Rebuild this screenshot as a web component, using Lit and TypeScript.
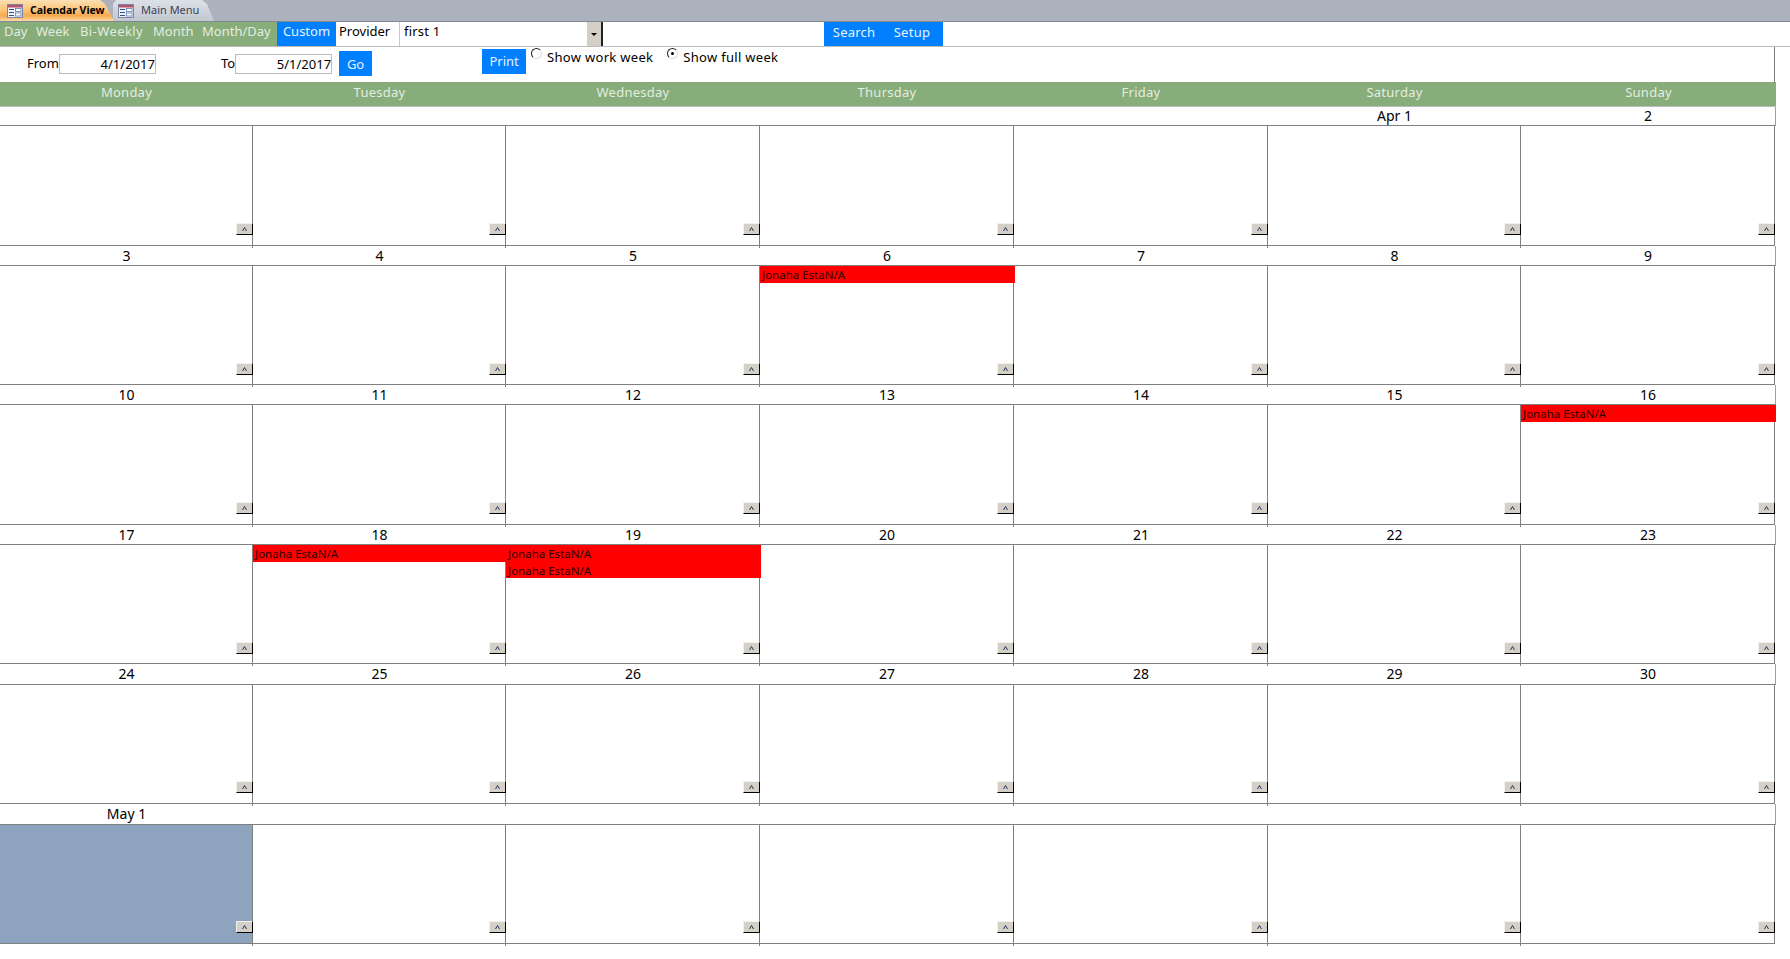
import { LitElement, html, css, svg } from "lit";
import { customElement } from "lit/decorators.js";

const DAYS = ["Monday", "Tuesday", "Wednesday", "Thursday", "Friday", "Saturday", "Sunday"];
const WEEKS: { dates: string[]; events: Record<number, number>; shaded?: number[] }[] = [
  { dates: ["", "", "", "", "", "Apr 1", "2"], events: {} },
  { dates: ["3", "4", "5", "6", "7", "8", "9"], events: { 3: 1 } },
  { dates: ["10", "11", "12", "13", "14", "15", "16"], events: { 6: 1 } },
  { dates: ["17", "18", "19", "20", "21", "22", "23"], events: { 1: 1, 2: 2 } },
  { dates: ["24", "25", "26", "27", "28", "29", "30"], events: {} },
  { dates: ["May 1", "", "", "", "", "", ""], events: {}, shaded: [0] },
];

const formIcon = svg`<svg class="ficon" width="16" height="14" viewBox="0 0 16 14">
  <rect x="0.5" y="0.5" width="15" height="13" fill="#eef1f7" stroke="#7d84a8"/>
  <rect x="1" y="1" width="14" height="2.5" fill="#b9506c"/>
  <rect x="2" y="5" width="5" height="1" fill="#34507f"/>
  <rect x="2" y="8" width="5" height="1" fill="#34507f"/>
  <rect x="2" y="11" width="5" height="1" fill="#34507f"/>
  <rect x="8.5" y="4.5" width="5.5" height="3" fill="#fff" stroke="#5f7fb0" stroke-width="0.8"/>
  <rect x="8.5" y="9" width="5.5" height="3" fill="#fff" stroke="#5f7fb0" stroke-width="0.8"/>
</svg>`;

@customElement("app-root")
export class AppRoot extends LitElement {
  static styles = css`
    :host {
      display: block;
      width: 1790px;
      height: 959px;
      background: #fff;
      overflow: hidden;
      font-family: "Noto Sans", "Open Sans", sans-serif;
      font-size: 13px;
      color: #000;
    }
    .tabs {
      display: flex;
      height: 21px;
      background: #abb2bd;
      border-bottom: 1px solid #808890;
    }
    .tab {
      display: flex;
      align-items: center;
      box-sizing: border-box;
      height: 21px;
      white-space: nowrap;
    }
    .tab span { padding-bottom: 2px; }
    .tab.active {
      width: 114px;
      padding-left: 7px;
      gap: 7px;
      background: linear-gradient(#fbe0b4 0%, #fcc67a 45%, #f8a94e 75%, #fbd9a8 100%);
      font-size: 10.5px;
      font-weight: 700;
      clip-path: polygon(0 0, calc(100% - 14px) 0, calc(100% - 9px) 4px, 100% 100%, 0 100%);
    }
    .tab.other {
      width: 101px;
      margin-left: -1px;
      padding-left: 5px;
      gap: 7px;
      background: linear-gradient(#dde1e7, #c2c7d0);
      color: #3d3f55;
      font-size: 11px;
      clip-path: polygon(3px 0, calc(100% - 12px) 0, calc(100% - 7px) 4px, 100% 100%, 0 100%, 0 4px);
    }
    .ficon { flex: none; }
    .nav {
      display: flex;
      height: 24px;
      border-bottom: 1px solid #bbb;
    }
    .links {
      display: flex;
      width: 277px;
      background: #87ad7a;
      color: #e4ece0;
    }
    .links span {
      line-height: 18px;
      white-space: nowrap;
    }
    .links span:nth-child(1) { margin-left: 4px; width: 32px; }
    .links span:nth-child(2) { width: 44px; }
    .links span:nth-child(3) { width: 73px; letter-spacing: 0.4px; }
    .links span:nth-child(4) { width: 49px; }
    .links span:nth-child(5) { width: 70px; }
    .blue {
      display: flex;
      align-items: center;
      justify-content: center;
      background: #0080ff;
      color: #e8f2ff;
      white-space: nowrap;
    }
    .custom { width: 59px; align-items: flex-start; line-height: 18px; }
    .provider { width: 63px; padding-left: 3px; box-sizing: border-box; line-height: 18px; }
    .combo {
      display: flex;
      width: 204px;
      height: 24px;
      box-sizing: border-box;
      border-left: 1px solid #c8c8c8;
      justify-content: space-between;
    }
    .combo span { padding-left: 4px; line-height: 18px; letter-spacing: 0.2px; }
    .arrow {
      display: flex;
      align-items: center;
      justify-content: center;
      width: 16px;
      box-sizing: border-box;
      background: #d4d0c8;
      border-right: 2px solid #222;
    }
    .arrow i {
      width: 0;
      height: 0;
      border: 3px solid transparent;
      border-top-color: #000;
      border-bottom: 0;
    }
    .right { display: flex; margin-left: 221px; width: 119px; }
    .right .blue { line-height: 20px; align-items: flex-start; letter-spacing: 0.2px; }
    .right .blue:first-child { width: 60px; }
    .right .blue:last-child { width: 59px; padding-right: 3px; box-sizing: border-box; letter-spacing: 0.3px; }
    .toolbar {
      display: flex;
      width: 1775px;
      height: 35px;
      box-sizing: border-box;
      padding-left: 27px;
      border-right: 1px solid #808080;
    }
    .lbl { line-height: 19px; margin-top: 7px; }
    .to { margin-left: 65px; }
    .date {
      box-sizing: border-box;
      width: 97px;
      height: 20px;
      margin-top: 7px;
      border: 1px solid #bdbdbd;
      text-align: right;
      line-height: 19px;
    }
    .go { width: 33px; height: 25px; margin-left: 7px; margin-top: 4px; }
    .print { width: 44px; height: 25px; margin-left: 110px; margin-top: 2px; padding-bottom: 1px; box-sizing: border-box; }
    .radio {
      box-sizing: border-box;
      width: 11px;
      height: 11px;
      border-radius: 50%;
      border: 1px solid;
      border-color: #222 #ddd #ddd #222;
      background: #fff;
      margin-top: 1px;
      display: flex;
      align-items: center;
      justify-content: center;
      flex: none;
    }
    .radio i { width: 3px; height: 3px; border-radius: 50%; background: #000; }
    .radio-l { margin-left: 5px; }
    .rl { margin-left: 5px; margin-top: 1px; line-height: 18px; white-space: nowrap; letter-spacing: 0.3px; }
    .radio-r { margin-left: 14px; }
    .days {
      display: grid;
      grid-template-columns: 253px 253px 254px 254px 254px 253px 255px;
      width: 1776px;
      height: 25px;
      box-sizing: border-box;
      background: #87ad7a;
      border-bottom: 1px solid #bbb;
      color: #e4ece0;
      text-align: center;
      line-height: 20px;
      letter-spacing: 0.25px;
    }
    .cal {
      display: grid;
      width: 1776px;
      grid-template-columns: 253px 253px 254px 254px 254px 253px 255px;
      grid-template-rows: 19px 120px 20px 119px 20px 120px 20px 119px 21px 119px 21px 119px;
    }
    .d {
      border-bottom: 1px solid #808080;
      text-align: center;
      line-height: 20px;
      white-space: nowrap;
      font-size: 14px;
      overflow: hidden;
    }
    .d:nth-child(-n + 7) { line-height: 18px; }
    .d.last { border-right: 1px solid #a0a0a0; }
    .c {
      display: grid;
      grid-template-rows: 97px 12px;
      position: relative;
      border-right: 1px solid #808080;
      border-bottom: 1px solid #808080;
      min-width: 0;
    }
    .c.up { grid-template-rows: 96px 12px; }
    .c:not(.last)::before {
      content: "";
      position: absolute;
      left: 100%;
      top: 100%;
      width: 1px;
      height: 3px;
      background: #808080;
    }
    .c:not(.last)::after {
      content: "";
      position: absolute;
      left: calc(100% + 1px);
      top: 100%;
      width: 2px;
      height: 1px;
      background: #fff;
    }
    .c.last { margin-right: 1px; }
    .c.shade { background: #8ea3bd; }
    .evs { min-width: 0; }
    .ev {
      box-sizing: border-box;
      height: 16.5px;
      padding: 1px 0 0 2px;
      line-height: 16px;
      margin-right: -2px;
      background: #f00;
      color: #300000;
      font-size: 11.5px;
      white-space: nowrap;
      position: relative;
    }
    .sb {
      display: flex;
      align-items: center;
      justify-content: center;
      box-sizing: border-box;
      width: 17px;
      height: 12px;
      margin-right: -1px;
      justify-self: end;
      background: #d4d0c8;
      border: 1px solid;
      border-color: #f4f2ee #000 #000 #f4f2ee;
      position: relative;
      z-index: 1;
    }
    .sb svg { display: block; }
  `;

  private scrollBtn() {
    return html`<div class="sb"><svg width="5" height="4" viewBox="0 0 5 4">
      <path d="M0.5 4 L2.5 0.5 L4.5 4" fill="none" stroke="#26365e" stroke-width="1"/>
    </svg></div>`;
  }

  render() {
    return html`
      <div class="tabs">
        <div class="tab active">${formIcon}<span>Calendar View</span></div>
        <div class="tab other">${formIcon}<span>Main Menu</span></div>
      </div>
      <div class="nav">
        <div class="links">
          <span>Day</span><span>Week</span><span>Bi-Weekly</span><span>Month</span><span>Month/Day</span>
        </div>
        <div class="blue custom">Custom</div>
        <div class="provider">Provider</div>
        <div class="combo"><span>first 1</span><div class="arrow"><i></i></div></div>
        <div class="right"><div class="blue">Search</div><div class="blue">Setup</div></div>
      </div>
      <div class="toolbar">
        <div class="lbl">From</div>
        <div class="date">4/1/2017</div>
        <div class="lbl to">To</div>
        <div class="date">5/1/2017</div>
        <div class="blue go">Go</div>
        <div class="blue print">Print</div>
        <div class="radio radio-l"></div>
        <div class="rl">Show work week</div>
        <div class="radio radio-r"><i></i></div>
        <div class="rl">Show full week</div>
      </div>
      <div class="days">${DAYS.map((d) => html`<div>${d}</div>`)}</div>
      <div class="cal">
        ${WEEKS.map(
          (w, wi) => html`
            ${w.dates.map((d, i) => html`<div class="d ${i === 6 ? "last" : ""}">${d}</div>`)}
            ${w.dates.map(
              (_, i) => html`<div class="c ${i === 6 ? "last" : ""} ${wi >= 4 ? "up" : ""} ${w.shaded?.includes(i) ? "shade" : ""}">
                <div class="evs">
                  ${Array.from({ length: w.events[i] ?? 0 }).map(() => html`<div class="ev">Jonaha EstaN/A</div>`)}
                </div>
                ${this.scrollBtn()}
              </div>`
            )}
          `
        )}
      </div>
    `;
  }
}
